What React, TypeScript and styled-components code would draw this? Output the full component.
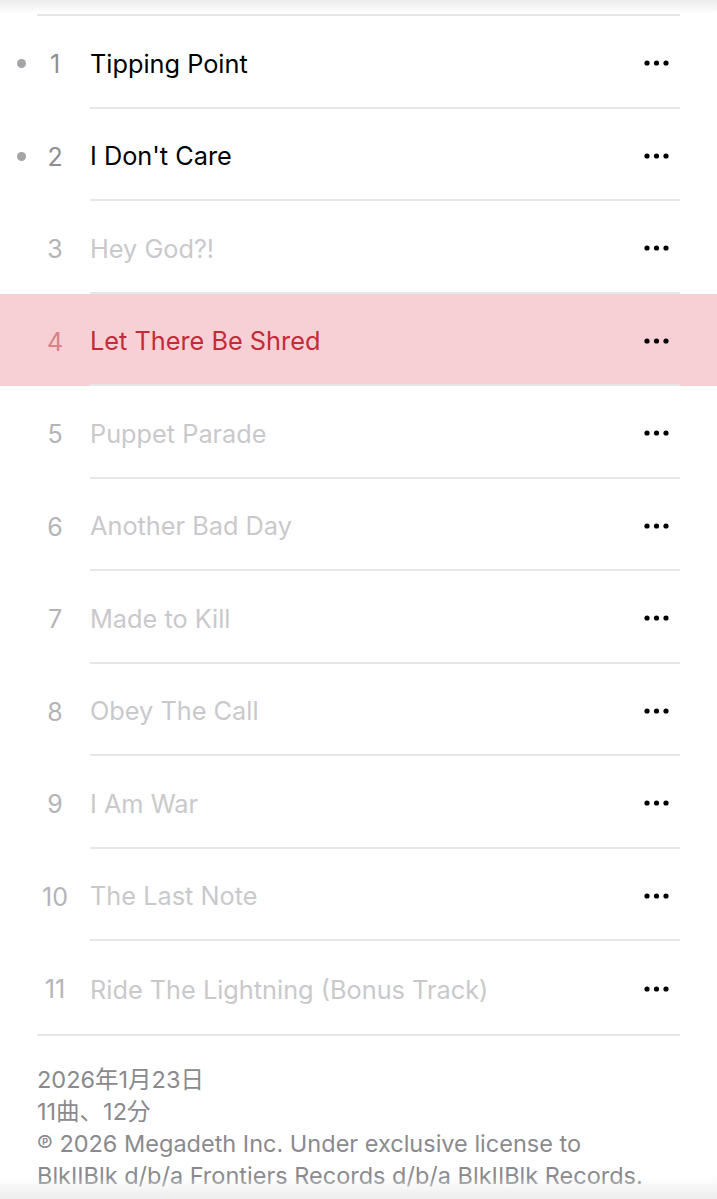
import styled, { createGlobalStyle } from "styled-components";

interface Track {
  no: number;
  title: string;
  state: "played" | "current" | "dim";
  dot?: boolean;
}

const TRACKS: Track[] = [
  { no: 1, title: "Tipping Point", state: "played", dot: true },
  { no: 2, title: "I Don't Care", state: "played", dot: true },
  { no: 3, title: "Hey God?!", state: "dim" },
  { no: 4, title: "Let There Be Shred", state: "current" },
  { no: 5, title: "Puppet Parade", state: "dim" },
  { no: 6, title: "Another Bad Day", state: "dim" },
  { no: 7, title: "Made to Kill", state: "dim" },
  { no: 8, title: "Obey The Call", state: "dim" },
  { no: 9, title: "I Am War", state: "dim" },
  { no: 10, title: "The Last Note", state: "dim" },
  { no: 11, title: "Ride The Lightning (Bonus Track)", state: "dim" },
];

const GlobalStyle = createGlobalStyle`
  html, body {
    margin: 0;
    padding: 0;
    background: #ffffff;
  }
  body {
    font-family: Inter, "Noto Sans CJK JP", sans-serif;
  }
`;

const App = () => {
  return (
    <>
      <GlobalStyle />
      <Page>
        <TopFade />
        <TopRule />
        <TrackList>
          {TRACKS.map((track) => (
            <TrackRow key={track.no} $current={track.state === "current"}>
              <DotCell>{track.dot && <PlayedDot />}</DotCell>
              <TrackNo $state={track.state}>{track.no}</TrackNo>
              <TrackBody $last={track.no === TRACKS.length}>
                <TrackTitle $state={track.state}>{track.title}</TrackTitle>
                <MoreButton type="button" aria-label="more">
                  <svg width="26" height="6" viewBox="0 0 26 6">
                    <circle cx="3" cy="3" r="2.6" fill="#000" />
                    <circle cx="12.5" cy="3" r="2.6" fill="#000" />
                    <circle cx="22" cy="3" r="2.6" fill="#000" />
                  </svg>
                </MoreButton>
              </TrackBody>
            </TrackRow>
          ))}
        </TrackList>
        <BottomRule />
        <Footer>
          <FooterLine>2026年1月23日</FooterLine>
          <FooterLine>11曲、12分</FooterLine>
          <FooterLine>℗ 2026 Megadeth Inc. Under exclusive license to</FooterLine>
          <FooterLine>BlkIIBlk d/b/a Frontiers Records d/b/a BlkIIBlk Records.</FooterLine>
        </Footer>
        <BottomFade />
      </Page>
    </>
  );
};

export default App;

const Page = styled.div`
  position: relative;
  width: 717px;
  height: 1199px;
  overflow: hidden;
  background: #fff;
`;

const TopFade = styled.div`
  position: absolute;
  top: 0;
  left: 0;
  right: 0;
  height: 14px;
  background: linear-gradient(#ececec, rgba(255, 255, 255, 0));
`;

const BottomFade = styled.div`
  position: absolute;
  bottom: 0;
  left: 0;
  right: 0;
  height: 22px;
  background: linear-gradient(rgba(255, 255, 255, 0), #ededed);
`;

const TopRule = styled.div`
  margin: 14px 37px 0 37px;
  height: 2px;
  background: #e6e6e8;
`;

const BottomRule = styled.div`
  margin: 0 37px;
  height: 2px;
  background: #e6e6e8;
`;

const TrackList = styled.ul`
  list-style: none;
  margin: 0;
  padding: 0;
`;

const TrackRow = styled.li<{ $current: boolean }>`
  display: flex;
  align-items: stretch;
  height: 92.5px;
  background: ${(p) => (p.$current ? "#f7d0d6" : "transparent")};
`;

const DotCell = styled.div`
  width: 37px;
  display: flex;
  align-items: center;
  justify-content: center;
  padding: 3px 0 0 6px;
  box-sizing: border-box;
`;

const PlayedDot = styled.span`
  width: 9px;
  height: 9px;
  border-radius: 50%;
  background: #a4a4a8;
`;

const TrackNo = styled.div<{ $state: string }>`
  width: 36px;
  display: flex;
  align-items: center;
  justify-content: center;
  padding-top: 4px;
  font-size: 25px;
  color: ${(p) => (p.$state === "current" ? "#d9818a" : p.$state === "played" ? "#8e8e93" : "#b4b4b8")};
  margin-right: 17px;
`;

const TrackBody = styled.div<{ $last: boolean }>`
  flex: 1;
  display: flex;
  align-items: center;
  justify-content: space-between;
  margin-right: 37px;
  padding-top: 4px;
  border-bottom: ${(p) => (p.$last ? "none" : "2px solid #e6e6e8")};
  box-sizing: border-box;
`;

const TrackTitle = styled.span<{ $state: string }>`
  font-size: 25.3px;
  color: ${(p) => (p.$state === "current" ? "#c42b36" : p.$state === "played" ? "#000" : "#c9c9cc")};
`;

const MoreButton = styled.button`
  border: none;
  background: transparent;
  padding: 0;
  margin-right: 10px;
  display: flex;
  align-items: center;
`;

const Footer = styled.div`
  padding: 28px 37px 0 37px;
`;

const FooterLine = styled.div`
  font-size: 23.5px;
  line-height: 32px;
  color: #8a8a8e;
`;
